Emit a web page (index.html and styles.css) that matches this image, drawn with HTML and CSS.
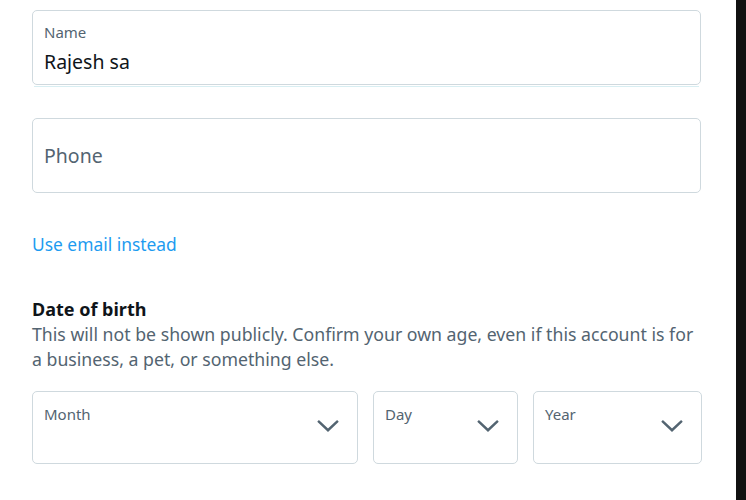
FILE: index.html
```html
<!DOCTYPE html>
<html lang="en">
<head>
<meta charset="utf-8">
<title>Sign up</title>
<link rel="stylesheet" href="styles.css">
</head>
<body>
<div class="page">
  <main class="form">
    <div class="field field-filled">
      <span class="field-label">Name</span>
      <span class="field-value">Rajesh sa</span>
    </div>
    <div class="field-underline"></div>

    <div class="field field-empty">
      <span class="field-placeholder">Phone</span>
    </div>

    <a class="link" href="#">Use email instead</a>

    <section class="dob">
      <h2 class="dob-title">Date of birth</h2>
      <p class="dob-text">This will not be shown publicly. Confirm your own age, even if this account is for a business, a pet, or something else.</p>
      <div class="selects">
        <div class="select">
          <span class="select-label">Month</span>
          <svg class="chevron" viewBox="0 0 24 24"><path d="M3.5 8.5 L12 16.5 L20.5 8.5"/></svg>
        </div>
        <div class="select">
          <span class="select-label">Day</span>
          <svg class="chevron" viewBox="0 0 24 24"><path d="M3.5 8.5 L12 16.5 L20.5 8.5"/></svg>
        </div>
        <div class="select">
          <span class="select-label">Year</span>
          <svg class="chevron" viewBox="0 0 24 24"><path d="M3.5 8.5 L12 16.5 L20.5 8.5"/></svg>
        </div>
      </div>
    </section>
  </main>
  <div class="scrollbar"></div>
</div>
</body>
</html>
```
FILE: styles.css
```css
html, body {
  margin: 0;
  padding: 0;
  background: #ffffff;
}

body {
  font-family: "Noto Sans", "Open Sans", sans-serif;
  color: #0f1419;
}

.page {
  display: flex;
  width: 746px;
  height: 500px;
  overflow: hidden;
}

.form {
  width: 669px;
  padding: 10px 0 0 32px;
  display: flex;
  flex-direction: column;
}

.scrollbar {
  width: 10px;
  margin-left: auto;
  background: #111111;
}

.field {
  box-sizing: border-box;
  height: 75px;
  border: 1px solid #cfd9de;
  border-radius: 5px;
  padding: 0 11px;
  display: flex;
  flex-direction: column;
}

.field-filled {
  padding-top: 11px;
}

.field-label {
  font-size: 15px;
  line-height: 20px;
  color: #536471;
}

.field-value {
  font-size: 19.5px;
  line-height: 28px;
  margin-top: 6px;
  color: #0f1419;
}

.field-underline {
  height: 1px;
  margin: 1px 2px 0 2px;
  background: #d8eef2;
}

.field-empty {
  margin-top: 31px;
  justify-content: center;
}

.field-placeholder {
  font-size: 19.5px;
  line-height: 28px;
  color: #536471;
}

.link {
  align-self: flex-start;
  margin-top: 39px;
  font-size: 17.4px;
  line-height: 24px;
  color: #1d9bf0;
  text-decoration: none;
}

.dob {
  margin-top: 40px;
}

.dob-title {
  margin: 0;
  font-size: 18px;
  line-height: 26px;
  font-weight: 700;
  color: #0f1419;
}

.dob-text {
  margin: 0;
  font-size: 17.7px;
  line-height: 25px;
  color: #536471;
}

.selects {
  display: grid;
  grid-template-columns: 326px 145px 169px;
  column-gap: 15px;
  margin-top: 19px;
}

.select {
  box-sizing: border-box;
  height: 73px;
  border: 1px solid #cfd9de;
  border-radius: 5px;
  padding: 12px 11px 0 11px;
  position: relative;
}

.select-label {
  display: block;
  font-size: 15px;
  line-height: 20px;
  color: #536471;
}

.chevron {
  position: absolute;
  right: 15px;
  top: 19px;
  width: 28px;
  height: 28px;
  fill: none;
  stroke: #536471;
  stroke-width: 2.1;
}
```
